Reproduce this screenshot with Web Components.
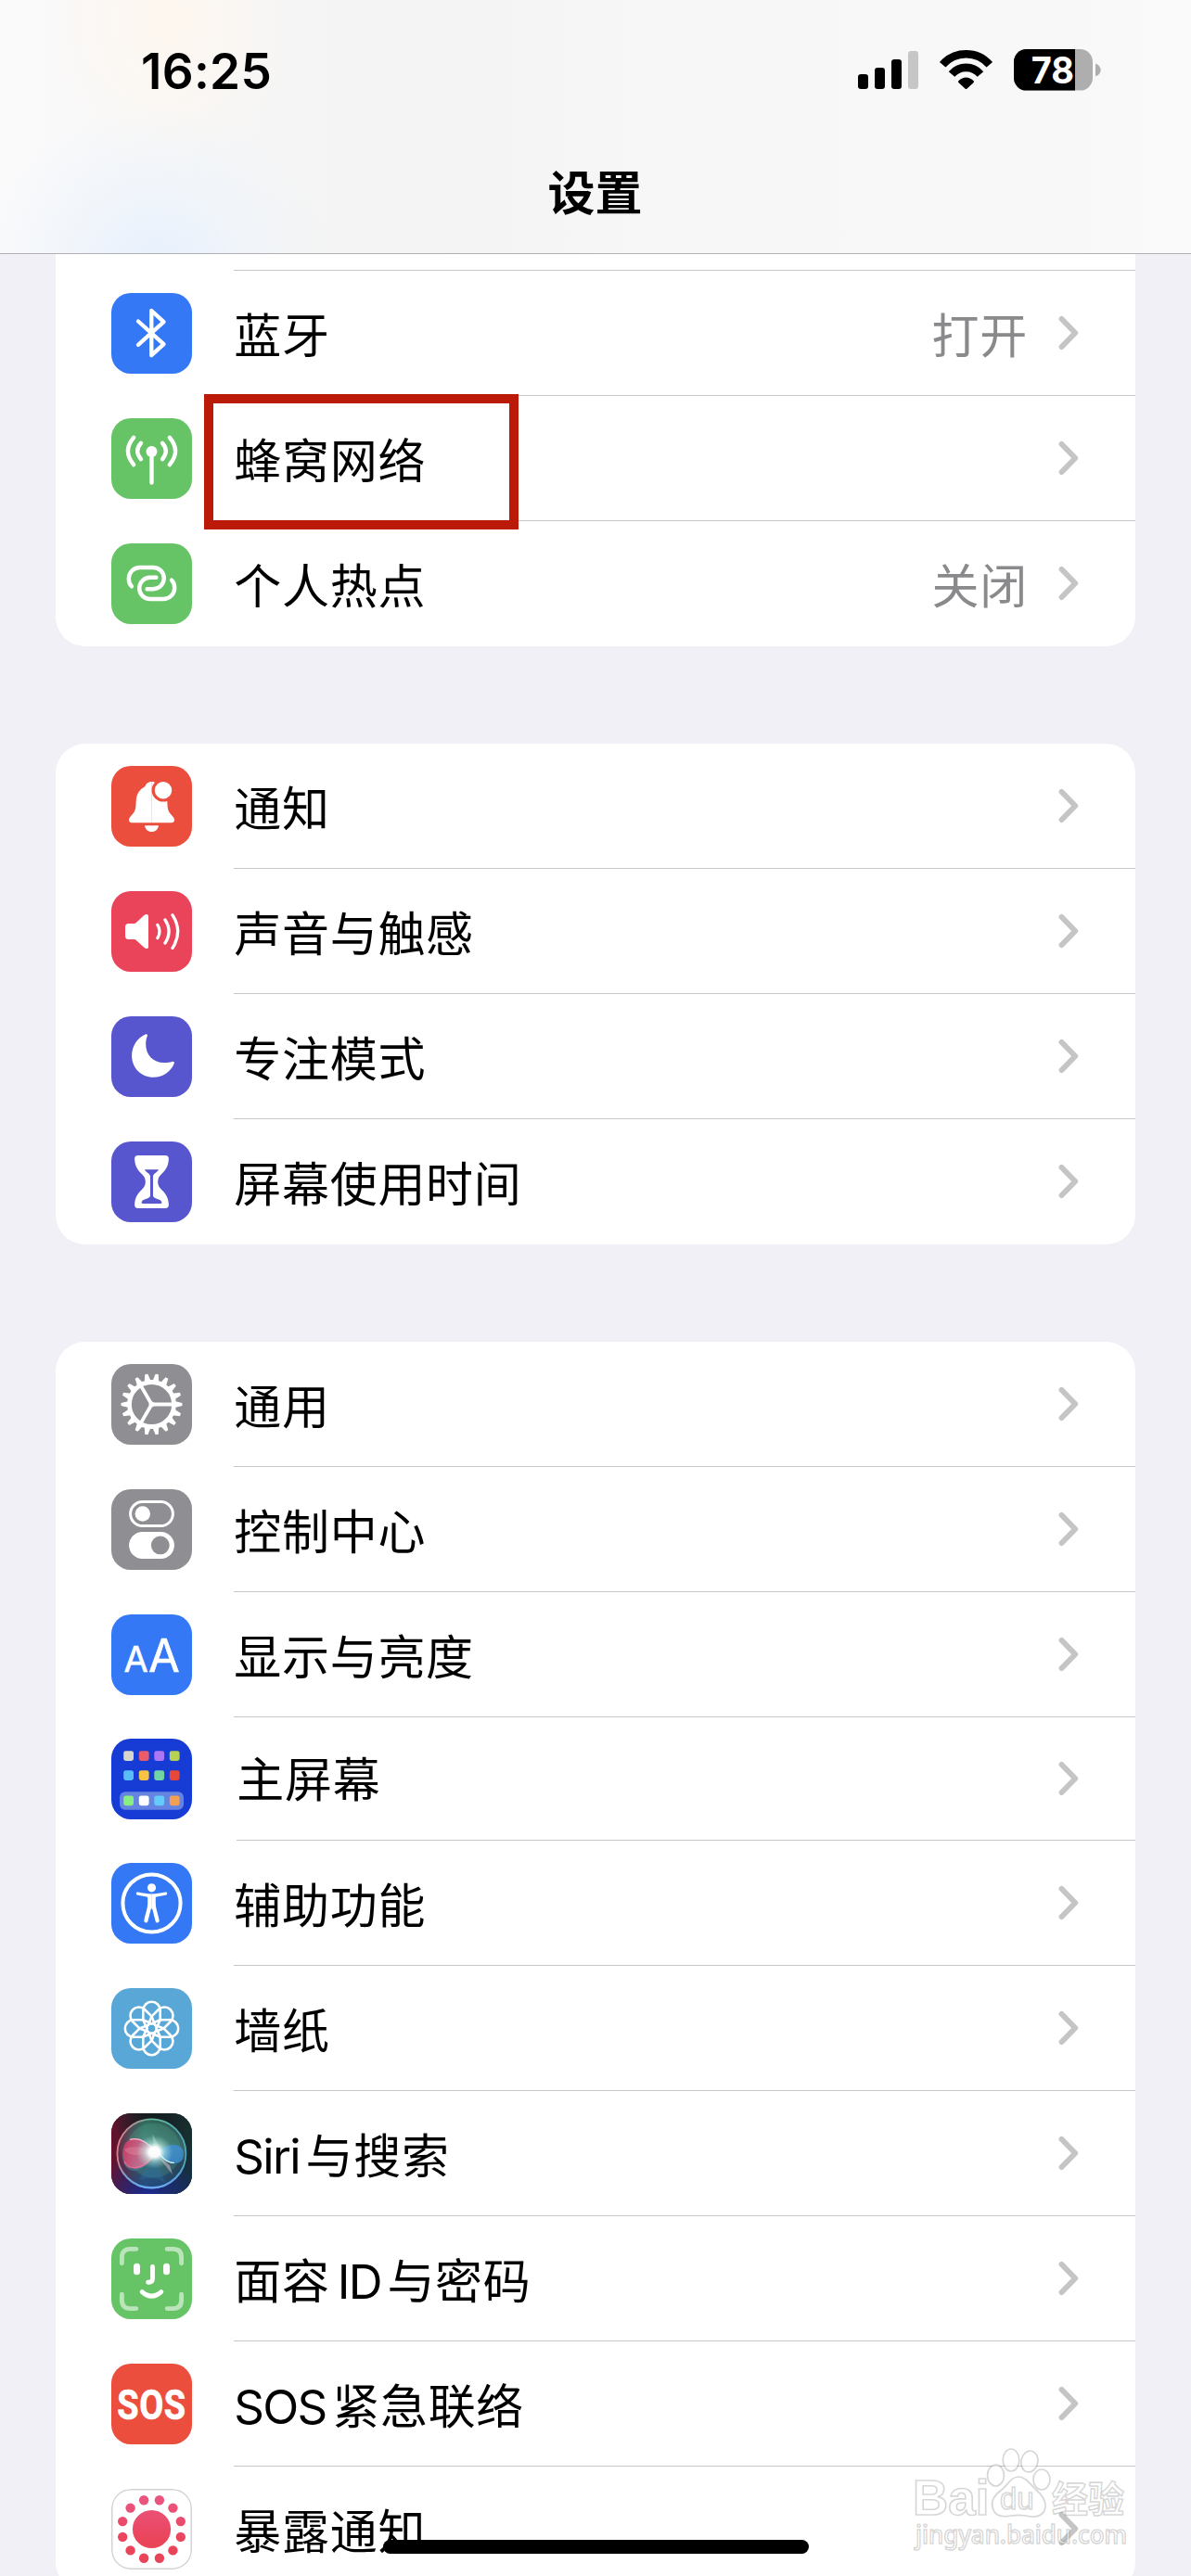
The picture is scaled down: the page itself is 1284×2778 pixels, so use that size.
<!DOCTYPE html>
<html lang="zh-CN">
<head>
<meta charset="utf-8">
<title>设置</title>
<style>
  html, body { margin: 0; padding: 0; }
  body { width: 1284px; height: 2778px; overflow: hidden; background: #f1f0f6; font-family: Inter, "Noto Sans CJK SC", sans-serif; color: #000; }
</style>
</head>
<body>
<settings-screen>
  <status-bar slot="header" time="16:25" battery="78"></status-bar>
  <nav-title slot="header">设置</nav-title>

  <settings-group clipped>
    <settings-row icon="bluetooth" value="打开">蓝牙</settings-row>
    <settings-row icon="cellular" marked>蜂窝网络</settings-row>
    <settings-row icon="hotspot" value="关闭" last>个人热点</settings-row>
  </settings-group>

  <settings-group>
    <settings-row icon="bell">通知</settings-row>
    <settings-row icon="sound">声音与触感</settings-row>
    <settings-row icon="moon">专注模式</settings-row>
    <settings-row icon="hourglass" last>屏幕使用时间</settings-row>
  </settings-group>

  <settings-group>
    <settings-row icon="gear">通用</settings-row>
    <settings-row icon="control">控制中心</settings-row>
    <settings-row icon="display">显示与亮度</settings-row>
    <settings-row icon="home" compact>主屏幕</settings-row>
    <settings-row icon="access">辅助功能</settings-row>
    <settings-row icon="wallpaper">墙纸</settings-row>
    <settings-row icon="siri"><latin-run after>Siri</latin-run>与搜索</settings-row>
    <settings-row icon="face">面容<latin-run before after>ID</latin-run>与密码</settings-row>
    <settings-row icon="sos"><latin-run after>SOS</latin-run>紧急联络</settings-row>
    <settings-row icon="exposure" last>暴露通知</settings-row>
  </settings-group>

  <home-indicator slot="overlay"></home-indicator>
  <water-mark slot="overlay"></water-mark>
</settings-screen>

<script>
const polar = (r, deg) => {
  const a = deg * Math.PI / 180;
  return (43.5 + r * Math.cos(a)).toFixed(2) + ' ' + (43.5 + r * Math.sin(a)).toFixed(2);
};
const range = n => Array.from({ length: n }, (_, i) => i);

const gearTeeth = range(18).map(i => {
  const a = i * 20;
  return `M${polar(25, a - 7.6)}L${polar(27, a - 6.4)}L${polar(33, a - 2.8)}L${polar(33, a + 2.8)}L${polar(27, a + 6.4)}L${polar(25, a + 7.6)}Z`;
}).join('');
const gearSpokes = [0, 120, 240].map(a => `M43.5 43.5L${polar(23, a)}`).join('');

const petals = range(8).map(i =>
  `<path transform="rotate(${i * 45} 43.5 43.5)" d="M43.5 38.4L34.3 34.2V24A9.2 9.2 0 0 1 52.7 24V34.2Z"/>`).join('');

const homeColors = [
  ['#d6d6cd', '#ea5c6a', '#ae76f4', '#b7d154'],
  ['#5bbdf6', '#f6c343', '#72d4a5', '#e6493a'],
  ['#88ee80', '#ffffff', '#62cbf9', '#f09f55']
];
const homeApps = homeColors.map((row, r) => row.map((c, i) =>
  `<rect x="${[13.2, 29.8, 46.3, 62.8][i]}" y="${[13.2, 34.2, 61.4][r]}" width="10.8" height="10.8" rx="2.4" fill="${c}"/>`).join('')).join('');

const exposureDots = range(12).map(i => {
  const [x, y] = polar(32.4, 15 + i * 30).split(' ');
  return `<circle cx="${x}" cy="${y}" r="5.2"/>`;
}).join('');

const halfBell = 'M43.5 17C39.5 17 37.2 19.4 36.4 22.2C30 25 27 31 26.7 38C26.4 46 26 48.5 22.5 52.5C20 55.3 19 56.5 19 58.3C19 60.2 20.3 61.2 22.2 61.2H43.6Z';
const mirror = 'transform="translate(87 0) scale(-1 1)"';
const halfPerson = 'M43.6 33.4C38 33.4 34 32.7 29 31.6C27.4 31.3 26.8 32 26.8 33C26.8 34.2 27.6 34.6 28.6 34.8L38 36.4C39 36.6 39.2 37 39.2 38V44C39.2 49 36.6 55 35.4 61.6C35.1 63.3 35.8 64.2 37 64.4C38.2 64.6 39 64 39.5 62.4L42.5 50.4C42.7 49.6 43 49.2 43.6 49.2Z';

const ICONS = {
  bluetooth: ['#3478f6', `<path d="M29 30.5L56.5 55.2L43.3 67.2V19L56.5 31.2L29 55.8" fill="none" stroke="#fff" stroke-width="4.3" stroke-linecap="round" stroke-linejoin="round"/>`],
  cellular: ['#67c466', `<g fill="none" stroke="#fff" stroke-width="4.4" stroke-linecap="round"><path d="M24.2 20.8Q11.6 35.5 24.2 50.2"/><path d="M32 26.8Q24.4 35.5 32 44.2"/><path d="M62.8 20.8Q75.4 35.5 62.8 50.2"/><path d="M55 26.8Q62.6 35.5 55 44.2"/><path d="M43.5 38V69.6"/></g><circle cx="43.5" cy="36" r="6" fill="#fff"/>`],
  hotspot: ['#67c466', `<g fill="none" stroke="#fff" stroke-width="4.4" stroke-linecap="round"><path d="M22 46.3C19.8 44.3 18.8 41.5 18.8 38A12 12 0 0 1 30.8 26H45.2A11.6 11.6 0 0 1 45.2 49.2H38.6"/><path d="M65 39.7C67.2 41.7 68.2 44.5 68.2 48A12 12 0 0 1 56.2 60H41.8A11.6 11.6 0 0 1 41.8 36.8H48.4"/></g>`],
  bell: ['#eb4e3d', `<g fill="#fff"><path d="${halfBell}"/><path ${mirror} d="${halfBell}"/><path d="M36 64.2H51C50.4 68.4 47.5 71 43.5 71S36.6 68.4 36 64.2Z"/></g><circle cx="56" cy="26.2" r="12.4" fill="#eb4e3d"/><circle cx="56" cy="26.2" r="9.2" fill="#fff"/>`],
  sound: ['#ea445a', `<path d="M18.6 35H24.6C25.4 35 26 34.8 26.6 34.2L35.4 26C37.4 24.4 40 24.8 40 27.4V60C40 62.6 37.4 62.6 35.6 61L26.6 52.8C26 52.2 25.4 52 24.6 52H18.6C16.4 52 15 50.6 15 48.4V38.6C15 36.4 16.4 35 18.6 35Z" fill="#fff"/><g fill="none" stroke="#fff" stroke-width="3.3" stroke-linecap="round"><path d="M49.8 36.4Q54.4 43.5 49.8 50.6"/><path d="M58 31Q66.2 43.5 58 56"/><path d="M66 25.8Q77.4 43.5 66 61.4"/></g>`],
  moon: ['#5856ce', `<path fill="#fff" d="M36.6 19.5C38.4 18.7 39.3 19.7 38.7 21.4C37.6 24.5 37.2 27 37.2 30C37.2 42 45 50 57 50C60.5 50 63 49.5 65.3 48.9C67.2 48.3 68.3 49.2 67.7 50.9C64 59.8 55.5 65.8 45.5 65.8C32 65.8 22.1 55.8 22.1 42.3C22.1 32.4 28 23.2 36.6 19.5Z"/>`],
  hourglass: ['#5856ce', `<path fill="#fff" d="M29 15H58C61 15 62 16.6 61.9 19C61.5 27 58 31.5 54 35.2C51.2 37.9 50.2 40.3 50.2 43.5C50.2 46.7 51.2 49.1 54 51.8C58 55.5 61.5 60 61.9 68C62 70.4 61 72 58 72H29C26 72 25 70.4 25.1 68C25.5 60 29 55.5 33 51.8C35.8 49.1 36.8 46.7 36.8 43.5C36.8 40.3 35.8 37.9 33 35.2C29 31.5 25.5 27 25.1 19C25 16.6 26 15 29 15Z"/><path fill="#5856ce" d="M36 30.2H51C49.6 33.6 45 34.2 45 38V58.5C45 61.8 53.8 62 54.4 65.4C54.6 66.4 54.2 67 53 67H34C32.8 67 32.4 66.4 32.6 65.4C33.2 62 42 61.8 42 58.5V38C42 34.2 37.4 33.6 36 30.2Z"/>`],
  gear: ['#8e8e93', `<path fill="#fff" d="${gearTeeth}"/><circle cx="43.5" cy="43.5" r="24" fill="none" stroke="#fff" stroke-width="4.8"/><path d="${gearSpokes}" stroke="#fff" stroke-width="3.8"/><circle cx="43.5" cy="43.5" r="3" fill="#fff"/>`],
  control: ['#8e8e93', `<rect x="20.6" y="13.6" width="45.8" height="26" rx="13" fill="none" stroke="#fff" stroke-width="3"/><circle cx="33.8" cy="26.5" r="8.2" fill="#fff"/><rect x="19.1" y="46" width="48.8" height="29" rx="14.5" fill="#fff"/><circle cx="52.8" cy="60.4" r="9.9" fill="#8e8e93"/>`],
  display: ['#3478f6', `<g fill="#fff" stroke="#fff" stroke-width=".6" stroke-linejoin="round" font-family="Inter" font-weight="400" text-anchor="middle"><text x="26.9" y="61.6" font-size="38">A</text><text x="57.3" y="61.6" font-size="49">A</text></g>`],
  home: ['#173cd5', `<rect x="9" y="57.2" width="69" height="19.6" rx="6" fill="#6583e0"/>${homeApps}`],
  access: ['#3478f6', `<circle cx="43.5" cy="43.5" r="31.1" fill="none" stroke="#fff" stroke-width="4"/><circle cx="43.5" cy="26.8" r="4.6" fill="#fff"/><g fill="#fff"><path d="${halfPerson}"/><path ${mirror} d="${halfPerson}"/></g>`],
  wallpaper: ['#59a7d7', `<g fill="none" stroke="#fff" stroke-width="2.6" stroke-linejoin="round">${petals}<circle cx="43.5" cy="43.5" r="5.2"/></g>`],
  siri: ['#1a2030', `<defs>
      <linearGradient id="bg" x1="0" y1="0" x2="1" y2="0"><stop offset="0" stop-color="#67122e"/><stop offset=".5" stop-color="#1f2430"/><stop offset="1" stop-color="#17302f"/></linearGradient>
      <radialGradient id="bl" cx=".45" cy="1.05" r=".62"><stop offset="0" stop-color="#1d2a94"/><stop offset="1" stop-color="#1d2a94" stop-opacity="0"/></radialGradient>
      <radialGradient id="br" cx="1" cy="1" r=".6"><stop offset="0" stop-color="#15304f"/><stop offset="1" stop-color="#15304f" stop-opacity="0"/></radialGradient>
      <radialGradient id="tp" cx=".5" cy="0" r=".5"><stop offset="0" stop-color="#101c1c" stop-opacity=".9"/><stop offset="1" stop-color="#101c1c" stop-opacity="0"/></radialGradient>
      <linearGradient id="orb" x1="0" y1="0" x2="0" y2="1"><stop offset="0" stop-color="#2c6e5a"/><stop offset=".45" stop-color="#5d9a98"/><stop offset=".62" stop-color="#355c70"/><stop offset="1" stop-color="#1d4f8c"/></linearGradient>
      <linearGradient id="shade" x1="0" y1="0" x2="1" y2="0"><stop offset="0" stop-color="#6b1c3a" stop-opacity=".95"/><stop offset=".4" stop-color="#3a3348" stop-opacity=".1"/><stop offset="1" stop-color="#10302f" stop-opacity=".5"/></linearGradient>
      <linearGradient id="rim" x1="0" y1=".4" x2="1" y2=".6"><stop offset="0" stop-color="#e07e92"/><stop offset=".4" stop-color="#62b79b"/><stop offset="1" stop-color="#4fa5ba"/></linearGradient>
      <linearGradient id="rimb" x1="0" y1="0" x2="0" y2="1"><stop offset=".6" stop-color="#5e9df0" stop-opacity="0"/><stop offset="1" stop-color="#6ba8f4"/></linearGradient>
      <linearGradient id="pk" x1="0" y1="0" x2="1" y2=".3"><stop offset="0" stop-color="#e02e5c"/><stop offset="1" stop-color="#c98aa6"/></linearGradient>
      <radialGradient id="glow"><stop offset="0" stop-color="#fff"/><stop offset=".3" stop-color="#fff" stop-opacity=".97"/><stop offset=".55" stop-color="#d6fff5" stop-opacity=".5"/><stop offset="1" stop-color="#a8f0de" stop-opacity="0"/></radialGradient>
    </defs>
    <rect width="87" height="87" fill="url(#bg)"/><rect width="87" height="87" fill="url(#br)"/><rect width="87" height="87" fill="url(#bl)"/><rect width="87" height="87" fill="url(#tp)"/>
    <circle cx="43.4" cy="43.4" r="37" fill="url(#orb)"/><circle cx="43.4" cy="43.4" r="37" fill="url(#shade)"/>
    <circle cx="45.5" cy="40" r="29.5" fill="#4aa68a" opacity=".28"/>
    <path d="M48 42C40 56 32 62 24 62C13 61 10 48 13 37C18 24 36 22 48 42Z" fill="#4d7e97" opacity=".6"/>
    <path d="M48 42C42 53 34 59.5 26 59.5C16 59.5 12 51 12.5 42C13 32 19 27 26 27C36 27 42 36 48 42Z" fill="url(#pk)" opacity=".85"/>
    <path d="M46 40C36 37 22 34 14 39C18 47 32 46 46 42Z" fill="#e58ba6" opacity=".4"/>
    <path d="M20 28.4C32 24.500 42 35 48 41" fill="none" stroke="#ffd3df" stroke-width="1.3" opacity=".85"/>
    <path d="M14 52C18 61 32 62 44 48" fill="none" stroke="#ff6f9a" stroke-width="1.2" opacity=".8"/>
    <path d="M50 42C56 36 60 34 67 34C74 34 78 38 78 44C78 51 74 54 68 54C60 54 54 47 50 42Z" fill="#3f8fd4" opacity=".8"/>
    <path d="M50 42C55 48 60 53.5 68 53.5" fill="none" stroke="#d8f0ff" stroke-width="1.2"/>
    <path d="M48 44L30 72Q48 66 58 76Z" fill="#2b6fa8" opacity=".35"/>
    <path d="M50 46L66 66L63 56Z" fill="#b8a2b4" opacity=".7"/><path d="M46 36L44 22L52 36Z" fill="#9ccabc" opacity=".55"/>
    <ellipse cx="46.5" cy="41.8" rx="20" ry="18" fill="url(#glow)"/>
    <circle cx="43.4" cy="43.4" r="37" fill="none" stroke="url(#rim)" stroke-width="1.8"/><circle cx="43.4" cy="43.4" r="37" fill="none" stroke="url(#rimb)" stroke-width="2.2"/>`],
  face: ['#67c466', `<g fill="none" stroke="#fff" stroke-width="4.9" stroke-linecap="round"><path opacity=".55" d="M11.4 26.8V20.4Q11.4 11.4 20.4 11.4H26.8M60.2 11.4H66.6Q75.6 11.4 75.6 20.4V26.8M75.6 60.2V66.6Q75.6 75.6 66.6 75.6H60.2M26.8 75.6H20.4Q11.4 75.6 11.4 66.6V60.2"/><path d="M44.5 30.4V43Q44.5 47.3 40.4 47.3H39.6"/><path d="M33.2 57.6Q43.5 66.6 53.8 57.6"/></g><rect x="24" y="26.8" width="7" height="12.4" rx="3.5" fill="#fff"/><rect x="56" y="26.8" width="7" height="12.4" rx="3.5" fill="#fff"/>`],
  sos: ['#eb4e3d', `<text transform="translate(43.5 59.6) scale(.84 1)" font-family="Roboto" font-weight="700" font-size="45" fill="#fff" stroke="#fff" stroke-width=".7" text-anchor="middle">SOS</text>`],
  exposure: ['#fff', `<defs><linearGradient id="ex" gradientUnits="userSpaceOnUse" x1="0" y1="6" x2="0" y2="56"><stop offset="0" stop-color="#ea5784"/><stop offset="1" stop-color="#ea445a"/></linearGradient></defs><rect x=".75" y=".75" width="85.5" height="85.5" rx="20.2" fill="#fff" stroke="#d2d2d4" stroke-width="1.5"/><g fill="url(#ex)"><circle cx="43.5" cy="43.5" r="20.6"/>${exposureDots}</g>`]
};

const define = (name, render) => customElements.define(name, class extends HTMLElement {
  connectedCallback() {
    if (this.shadowRoot) return;
    this.attachShadow({ mode: 'open' }).innerHTML = render(this);
  }
});

define('app-icon', el => {
  const [color, art] = ICONS[el.getAttribute('name')];
  return `<style>:host{display:block;width:87px;height:87px;border-radius:21px;overflow:hidden;background:${color};flex:none}svg{display:block}</style>
  <svg width="87" height="87" viewBox="0 0 87 87">${art}</svg>`;
});

define('latin-run', () => `<style>:host{display:inline-block;letter-spacing:-1.7px}
  :host([before]){margin-left:8px}:host([after]){margin-right:6.6px}</style><slot></slot>`);

define('settings-row', el => `<style>
  :host{display:flex;height:135px;padding-left:60px;gap:45px;box-sizing:border-box;font-size:51px;letter-spacing:.7px}
  :host([compact]){height:133px}
  app-icon{margin-top:24px}
  :host([compact]) app-icon{margin-top:23px}
  .body{flex:1;display:flex;align-items:center;box-sizing:border-box;border-bottom:1px solid #c6c6c8;padding:7px 61px 0 0;position:relative}
  :host([last]) .body{border-bottom-color:transparent}
  :host([compact]) .body{margin-left:3px;padding-top:4px}
  .label{flex:1;white-space:nowrap;line-height:60px;margin-left:.3px}
  .value{color:#8a8a8d;margin-right:33px;line-height:60px}
  .chev{display:block;margin-top:-7px}
  :host([compact]) .chev{margin-top:-4px}
  .mark{position:absolute;left:-32px;top:-2px;width:319px;height:126px;border:10px solid #ba1a07}
</style>
<app-icon name="${el.getAttribute('icon')}"></app-icon>
<div class="body"><span class="label"><slot></slot></span>
${el.hasAttribute('value') ? `<span class="value">${el.getAttribute('value')}</span>` : ''}
<svg class="chev" width="22" height="38" viewBox="0 0 22 38"><path d="M3.6 4L18.2 19L3.6 34" fill="none" stroke="#c5c5c7" stroke-width="6" stroke-linecap="round" stroke-linejoin="round"/></svg>
${el.hasAttribute('marked') ? '<div class="mark"></div>' : ''}</div>`);

define('settings-group', () => `<style>
  :host{display:block;width:1164px;background:#fff;border-radius:32px;flex:none}
  :host([clipped]){border-top-left-radius:0;border-top-right-radius:0}
  .stub{display:none;height:18px;box-sizing:border-box;border-bottom:1px solid #c6c6c8;margin-left:192px}
  :host([clipped]) .stub{display:block}
</style><div class="stub"></div><slot></slot>`);

define('status-bar', el => `<style>
  :host{display:flex;justify-content:space-between;align-items:flex-start;height:150px;padding:0 96px 0 152px;box-sizing:border-box}
  .time{font-weight:600;font-size:53px;line-height:60px;margin-top:47px;letter-spacing:.3px}
  svg{display:block;margin-top:50px}
</style>
<span class="time">${el.getAttribute('time')}</span>
<svg width="264" height="52" viewBox="924 50 264 52">
  <rect x="925" y="80" width="11" height="16" rx="3.2"/><rect x="943" y="73" width="11" height="23" rx="3.2"/><rect x="961" y="64" width="11" height="32" rx="3.2"/><rect x="979" y="55" width="11" height="41" rx="3.2" fill="#c6c6c6"/>
  <g fill="none" stroke="#000" stroke-width="8.6"><path d="M1016.2 69.8A33.4 33.4 0 0 1 1066.8 69.8"/><path d="M1026 80A20.4 20.4 0 0 1 1057 80"/></g>
  <path d="M1033.6 89.2C1032.8 88.4 1032.8 87.6 1033.6 87C1038.2 82.2 1044.8 82.2 1049.4 87C1050.2 87.6 1050.2 88.4 1049.4 89.2L1042.6 95.6Q1041.5 96.6 1040.4 95.6Z"/>
  <clipPath id="b"><rect x="1093" y="53" width="85" height="44.6" rx="13.5"/></clipPath>
  <g clip-path="url(#b)"><rect x="1093" y="53" width="85" height="45" fill="#aeaeae"/><rect x="1093" y="53" width="66" height="45"/></g>
  <path d="M1181 68.4C1188.6 71 1188.6 79.8 1181 82.2Z" fill="#aeaeae"/>
  <text transform="translate(1134.8 89.9) scale(.95 1)" font-family="Inter" font-weight="700" font-size="40" fill="#fff" text-anchor="middle">${el.getAttribute('battery')}</text>
</svg>`);

define('nav-title', () => `<style>:host{display:block;text-align:center;font-weight:600;font-size:51px;line-height:60px;height:60px;margin-top:28.5px;padding-right:1px}</style><slot></slot>`);

define('home-indicator', () => `<style>:host{display:block;position:absolute;left:413px;top:2739px;width:459px;height:15px;border-radius:8px;background:#000}</style>`);

define('water-mark', () => `<style>:host{display:block;position:absolute;left:980px;top:2636px}svg{display:block}</style>
<svg width="244" height="120" viewBox="980 2636 244 120" fill="#fff" fill-opacity=".55" stroke="#000" stroke-opacity=".16" stroke-width="1.7">
  <ellipse cx="1073.5" cy="2669.5" rx="9" ry="11.5"/><ellipse cx="1090" cy="2653" rx="8.8" ry="12"/><ellipse cx="1110" cy="2654.5" rx="9" ry="11.5" transform="rotate(12 1110 2654)"/><ellipse cx="1123" cy="2674" rx="9" ry="11"/>
  <path d="M1098 2671C1105 2671 1110 2678 1116 2684C1124 2691 1128 2697 1127 2704C1125 2715 1114 2715 1106 2713C1100 2712 1096 2712 1090 2713C1080 2715 1072 2713 1070 2704C1068 2696 1073 2690 1080 2685C1087 2679 1090 2671 1098 2671Z"/>
  <text x="984" y="2712" font-family="Liberation Sans" font-weight="700" font-size="53">Bai</text>
  <text x="1078" y="2706" font-family="Liberation Sans" font-size="33">du</text>
  <text x="1134" y="2709" font-family="Noto Sans CJK SC" font-weight="700" font-size="39">经验</text>
  <text x="987" y="2742.5" font-family="Noto Sans" font-weight="500" font-size="27" textLength="228" lengthAdjust="spacingAndGlyphs">jingyan.baidu.com</text>
</svg>`);

define('settings-screen', () => `<style>
  :host{display:block;position:relative;width:1284px;height:2778px;overflow:hidden}
  header{height:274px;box-sizing:border-box;border-bottom:1px solid #b0b0b3;
    background:radial-gradient(ellipse 190px 170px at 168px 285px,#e7f0fd 0,#ecf3fc90 50%,#f0f4fa00 100%),
      radial-gradient(ellipse 140px 170px at 180px 20px,#fef7ef 0,#fdf7f0a0 45%,#f9f7f400 100%),
      linear-gradient(90deg,#fafafb 0,#f5f5f5 25%,#f4f4f4 38%,#f7f7f7 55%,#f8f8f8 90%,#fafafa 100%)}
  main{display:flex;flex-direction:column;align-items:center;gap:105px}
</style>
<header><slot name="header"></slot></header>
<main><slot></slot></main>
<slot name="overlay"></slot>`);
</script>
</body>
</html>
